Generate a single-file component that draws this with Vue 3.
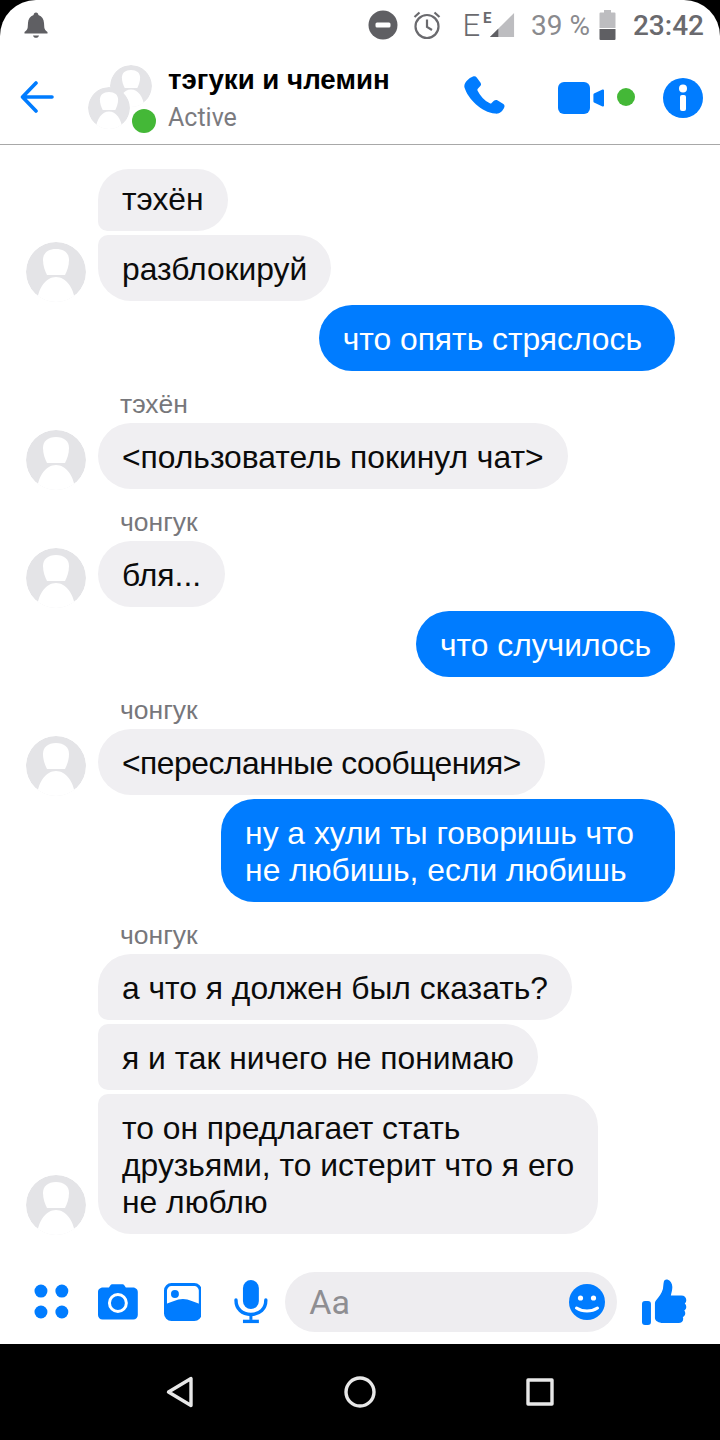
<script setup>
const groups = [
  { side: 'in', top: 24, items: [{ text: 'тэхён' }, { text: 'разблокируй' }] },
  { side: 'out', top: 4, items: [{ text: 'что опять стряслось', extra: 'pad-s' }] },
  { side: 'in', top: 20, name: 'тэхён', items: [{ text: '<пользователь покинул чат>' }] },
  { side: 'in', top: 20, name: 'чонгук', items: [{ text: 'бля...' }] },
  { side: 'out', top: 4, items: [{ text: 'что случилось' }] },
  { side: 'in', top: 20, name: 'чонгук', items: [{ text: '<пересланные сообщения>', extra: 'tight' }] },
  { side: 'out', top: 4, items: [{ text: 'ну а хули ты говоришь что\nне любишь, если любишь', extra: 'pad-l' }] },
  {
    side: 'in',
    top: 20,
    name: 'чонгук',
    items: [
      { text: 'а что я должен был сказать?' },
      { text: 'я и так ничего не понимаю' },
      { text: 'то он предлагает стать\nдрузьями, то истерит что я его\nне люблю' },
    ],
  },
]

const bubbleClass = (g, i, j) => {
  const many = g.side === 'in' && g.items.length > 1
  const end = g.items.length - 1
  return [
    g.items[j].extra,
    {
      top: i === 0 && j === 0,
      first: many && j === 0,
      mid: many && j > 0 && j < end,
      last: many && j === end,
    },
  ]
}
</script>

<template>
  <div class="phone">
    <div class="status">
      <svg class="bell" width="26" height="28" viewBox="0 0 26 28">
        <path d="M13 1.500c1.500 0 2.300 1 2.400 2.400 3.600 1.200 5.400 4.200 5.600 8l.3 4.500c.2 1.800 1.400 3.300 3.200 4.600v1.500H1.500V21c1.800-1.300 3-2.800 3.200-4.600l.3-4.500c.2-3.800 2-6.800 5.600-8 .1-1.400.9-2.400 2.400-2.400z" fill="#5f5f63" />
        <path d="M10 24.500h6c-.4 1.500-1.500 2.300-3 2.300s-2.600-.8-3-2.300z" fill="#5f5f63" />
      </svg>
      <div class="status-right">
        <svg width="30" height="30" viewBox="0 0 30 30"><circle cx="15" cy="15" r="14.500" fill="#5f5f63" /><rect x="7.500" y="12.500" width="15" height="5" rx="1.500" fill="#fff" /></svg>
        <svg class="alarm" width="30" height="30" viewBox="0 0 30 30" fill="none" stroke="#6a6a6e" stroke-width="2.200">
          <circle cx="15" cy="16.500" r="11.500" />
          <path d="M15 9.500v7.500l5 3M2.500 7l5-4.500M27.500 7l-5-4.500" />
        </svg>
        <span class="net">E</span>
        <span class="net-small">E</span>
        <svg class="signal" width="26" height="26" viewBox="0 0 28 28"><path d="M27 1v26H1z" fill="#bdbdc0" /><path d="M10 18v9H1z" fill="#5f5f63" /></svg>
        <span class="pct">39 %</span>
        <svg class="batt" width="17" height="30" viewBox="0 0 17 30"><path d="M5 0h7v2.500h3.500a1 1 0 0 1 1 1V18H.500V3.500a1 1 0 0 1 1-1H5z" fill="#bdbdc0" /><path d="M.500 19h16v10a1 1 0 0 1-1 1h-14a1 1 0 0 1-1-1z" fill="#5f5f63" /></svg>
        <span class="clock">23:42</span>
      </div>
    </div>

    <header class="head">
      <svg class="back" width="34" height="32" viewBox="0 0 34 32" fill="none" stroke="#007cff" stroke-width="3.600" stroke-linecap="round" stroke-linejoin="round">
        <path d="M32 16H3M16 2 2.500 16 16 30" />
      </svg>
      <div class="group-pic">
        <svg class="pic pic-back" viewBox="0 0 60 60"><use href="#person" /></svg>
        <svg class="pic pic-front" viewBox="0 0 60 60"><use href="#person" /></svg>
        <span class="online"></span>
      </div>
      <div class="title">
        <div class="name">тэгуки и члемин</div>
        <div class="active">Active</div>
      </div>
      <svg class="phone-ic" width="42" height="42" viewBox="0 0 42 42">
        <path d="M9 .500c1.500-.6 2.800-.2 3.700.9l3.700 5c.9 1.200.8 2.600-.1 3.700l-2.500 2.700c-.5.600-.5 1.200-.2 1.900 2.700 5.400 6.700 9.700 12.200 12.600.7.300 1.300.3 1.800-.3l2.300-2.200c1.100-1 2.500-1.200 3.800-.4l5.300 3.300c1.300.8 1.900 2.100 1.300 3.500-1.300 3.300-4.700 7.100-9.200 6.400C17.300 36.500 3.800 22.500.500 11.500-.7 7 4.500 2.300 9 .500z" fill="#007cff" />
      </svg>
      <svg class="video" width="46" height="32" viewBox="0 0 46 32">
        <rect x="0" y="0" width="32" height="32" rx="6" fill="#007cff" /><path d="M36 11.500 44.500 7.500c.5-.2 1.500 0 1.500 1v15c0 1-1 1.200-1.500 1l-8.500-4c-.4-.3-.6-.7-.6-1.200v-6.600c0-.5.200-.9.600-1.200z" fill="#007cff" />
      </svg>
      <span class="dot"></span>
      <svg class="info" width="40" height="40" viewBox="0 0 40 40">
        <circle cx="20" cy="20" r="20" fill="#007cff" /><circle cx="20" cy="10.500" r="4" fill="#fff" /><rect x="17" y="17" width="6" height="16" rx="2" fill="#fff" />
      </svg>
    </header>

    <main class="chat">
      <section v-for="(g, i) in groups" :key="i" class="group" :class="g.side" :style="{ marginTop: g.top + 'px' }">
        <div v-if="g.name" class="sender">{{ g.name }}</div>
        <div v-for="(item, j) in g.items" :key="j" class="row">
          <svg v-if="g.side === 'in' && j === g.items.length - 1" class="avatar" viewBox="0 0 60 60"><use href="#person" /></svg>
          <div class="bubble" :class="bubbleClass(g, i, j)">{{ item.text }}</div>
        </div>
      </section>
    </main>

    <footer class="composer">
      <svg width="36" height="36" viewBox="0 0 36 36" fill="#007cff"><circle cx="7" cy="7" r="6.500" /><circle cx="28" cy="7" r="6.500" /><circle cx="7" cy="28" r="6.500" /><circle cx="28" cy="28" r="6.500" /></svg>
      <svg width="40" height="36" viewBox="0 0 40 36"><path d="M5 3.500h6l1.500-2.300c.4-.6 1-1 1.700-1h10.500c.7 0 1.300.4 1.700 1L28 3.500h7c2.500 0 5 1.700 5 4.500v23c0 2.700-2 4.500-4.500 4.500h-31C2 35.500 0 33.700 0 31V8c0-2.800 2.500-4.500 5-4.500z" fill="#007cff" /><circle cx="20" cy="19" r="8.500" fill="none" stroke="#fff" stroke-width="3" /></svg>
      <svg width="38" height="38" viewBox="0 0 38 38"><rect x="1.500" y="1.500" width="35" height="35" rx="6" fill="#fff" stroke="#007cff" stroke-width="3" /><path d="M2 21c5-1.500 11-5 17-5s12 3.500 17 5v10a5 5 0 0 1-5 5H7a5 5 0 0 1-5-5z" fill="#007cff" /><circle cx="11" cy="11" r="4" fill="#007cff" /></svg>
      <svg width="34" height="44" viewBox="0 0 34 44" fill="none"><rect x="9" y="0" width="16" height="29" rx="8" fill="#007cff" /><path d="M2 20c0 9 6 14.500 15 14.500S32 29 32 20" stroke="#007cff" stroke-width="3.400" stroke-linecap="round" /><path d="M9 41.500h16" stroke="#007cff" stroke-width="3.400" /><path d="M17 34v6" stroke="#007cff" stroke-width="3" /></svg>
      <div class="input">
        <span class="aa">Aa</span>
        <svg width="36" height="36" viewBox="0 0 36 36"><circle cx="18" cy="18" r="18" fill="#007cff" /><circle cx="11.500" cy="14" r="2.600" fill="#fff" /><circle cx="24.500" cy="14" r="2.600" fill="#fff" /><path d="M7.500 24c6 4 15 4 21 0" fill="none" stroke="#fff" stroke-width="3" stroke-linecap="round" /></svg>
      </div>
      <svg class="like" width="46" height="46" viewBox="0 0 46 46" fill="#007cff">
        <rect x="0" y="22" width="9" height="24" rx="3" />
        <path d="M13 24c0-1 .4-1.800 1-2.500 3-3.400 6-7.500 7-11.500.4-2 .4-5 1-7.500.4-1.700 2-2.500 3.500-2 3 1 5 4 5 7.500 0 3-1 6-1.500 8.500h10.500c3 0 5 2 5 4.500 0 1.500-.5 2.700-1.500 3.500 1 .8 1.500 2 1.500 3.500s-.7 2.800-2 3.500c.6.800 1 1.700 1 2.800 0 1.700-1 3.200-2.500 3.700.3.700.4 1.300.4 2 0 2.500-2 4-4.500 4H21c-4 0-8-2-8-5z" />
      </svg>
    </footer>

    <nav class="nav">
      <svg width="28" height="32" viewBox="0 0 28 32" fill="none" stroke="#e8e8e8" stroke-width="3.400" stroke-linejoin="round"><path d="M25 2.500v27L2.500 16z" /></svg>
      <svg width="32" height="32" viewBox="0 0 32 32" fill="none" stroke="#e8e8e8" stroke-width="3.400"><circle cx="16" cy="16" r="14" /></svg>
      <svg width="28" height="28" viewBox="0 0 28 28" fill="none" stroke="#e8e8e8" stroke-width="3.400" stroke-linejoin="round"><rect x="2" y="2" width="24" height="24" /></svg>
    </nav>

    <span class="corner tl"></span>
    <span class="corner tr"></span>

    <svg class="defs" width="0" height="0">
      <defs>
        <clipPath id="disc"><circle cx="30" cy="30" r="30" /></clipPath>
        <g id="person" clip-path="url(#disc)">
          <circle cx="30" cy="30" r="30" fill="#e4e4e7" />
          <path d="M30 7c8 0 13 4 13 11 0 6-2 11-4 15H21c-2-4-4-9-4-15 0-7 5-11 13-11z" fill="#fff" />
          <path d="M11 60c1-14 9-25 19-25s18 11 19 25z" fill="#fff" />
        </g>
      </defs>
    </svg>
  </div>
</template>

<style scoped>
.phone {
  position: relative;
  width: 720px;
  height: 1440px;
  overflow: hidden;
  background: #fff;
  font-family: Roboto, "Liberation Sans", sans-serif;
  display: flex;
  flex-direction: column;
}
.status {
  height: 50px;
  display: flex;
  align-items: center;
  justify-content: space-between;
  padding: 0 16px 0 23px;
  color: #6a6a6e;
  flex: none;
}
.status-right {
  display: flex;
  align-items: center;
}
.alarm {
  margin-left: 14px;
}
.net {
  font-size: 31px;
  margin-left: 20px;
  font-weight: 300;
}
.net-small {
  font-size: 15px;
  font-weight: 700;
  margin: -14px 0 0 3px;
  width: 4px;
}
.signal {
  margin-left: 2px;
}
.pct {
  font-size: 28px;
  margin-left: 16px;
  color: #8a8a8e;
}
.batt {
  margin-left: 9px;
}
.clock {
  font-size: 28px;
  margin-left: 17px;
  font-weight: 500;
}
.head {
  height: 95px;
  flex: none;
  border-bottom: 1px solid #a8a8a8;
  box-sizing: border-box;
  display: flex;
  align-items: center;
  padding: 0 16px 0 20px;
}
.group-pic {
  position: relative;
  width: 72px;
  height: 70px;
  margin-left: 34px;
  flex: none;
}
.pic {
  position: absolute;
  width: 42px;
  height: 42px;
}
.pic-back {
  left: 22px;
  top: 3px;
}
.pic-front {
  left: 0;
  top: 25px;
}
.online {
  position: absolute;
  left: 44px;
  top: 47px;
  width: 24px;
  height: 24px;
  border-radius: 50%;
  background: #44b837;
}
.title {
  margin-left: 8px;
  width: 296px;
  flex: none;
  margin-top: 5px;
}
.name {
  font-family: "Liberation Sans", Arial, sans-serif;
  font-size: 27.700px;
  font-weight: 700;
  color: #000;
  line-height: 34px;
}
.active {
  font-size: 25px;
  line-height: 36px;
  margin-top: 3px;
  color: #7b7b7f;
}
.video {
  margin-left: 52px;
  margin-top: 2px;
}
.dot {
  width: 18px;
  height: 18px;
  border-radius: 50%;
  background: #44b837;
  margin-left: 13px;
}
.info {
  margin-left: 28px;
  margin-top: 2px;
}
.chat {
  flex: 1;
  min-height: 0;
  display: flex;
  flex-direction: column;
}
.group {
  display: flex;
  flex-direction: column;
  gap: 4px;
}
.group.in {
  padding-left: 98px;
  align-items: flex-start;
}
.group.out {
  padding-right: 45px;
  align-items: flex-end;
}
.sender {
  font-family: "Liberation Sans", Arial, sans-serif;
  font-size: 26.500px;
  line-height: 27px;
  color: #77777b;
  margin: 0 0 1px 22px;
}
.row {
  position: relative;
}
.avatar {
  position: absolute;
  left: -72px;
  bottom: -1px;
  width: 60px;
  height: 60px;
}
.bubble {
  font-family: "Liberation Sans", Arial, sans-serif;
  font-size: 31.800px;
  line-height: 37px;
  padding: 15.500px 24px 13.500px;
  border-radius: 33px;
  white-space: pre-line;
  background: #f0eff2;
  color: #0b0b0b;
}
.out .bubble {
  background: #007cff;
  color: #fff;
}
.bubble.top {
  padding-top: 11.500px;
}
.bubble.tight {
  letter-spacing: -0.480px;
}
.bubble.pad-s {
  padding-right: 33px;
}
.bubble.pad-l {
  padding-right: 41px;
}
.bubble.first {
  border-bottom-left-radius: 10px;
}
.bubble.mid {
  border-top-left-radius: 10px;
  border-bottom-left-radius: 10px;
}
.bubble.last {
  border-top-left-radius: 10px;
}
.composer {
  height: 84px;
  flex: none;
  display: flex;
  align-items: center;
  padding: 0 32px 0 34px;
  box-sizing: border-box;
}
.composer > svg:nth-child(2) {
  margin-left: 28px;
}
.composer > svg:nth-child(3) {
  margin-left: 26px;
}
.composer > svg:nth-child(4) {
  margin-left: 33px;
}
.input {
  width: 332px;
  height: 60px;
  margin-left: 17px;
  border-radius: 30px;
  background: #eeedf0;
  display: flex;
  align-items: center;
  justify-content: space-between;
  padding: 0 12px 0 24px;
  box-sizing: border-box;
  flex: none;
}
.aa {
  font-size: 34px;
  color: #8e8e92;
}
.like {
  margin-left: 25px;
}
.nav {
  height: 96px;
  flex: none;
  background: #000;
  display: flex;
  align-items: center;
  justify-content: center;
  gap: 150px;
}
.corner {
  position: absolute;
  top: 0;
  width: 36px;
  height: 36px;
  overflow: hidden;
}
.corner::before {
  content: "";
  position: absolute;
  width: 72px;
  height: 72px;
  border-radius: 50%;
  box-shadow: 0 0 0 40px #000;
  top: 0;
}
.corner.tl {
  left: 0;
}
.corner.tl::before {
  left: 0;
}
.corner.tr {
  right: 0;
}
.corner.tr::before {
  right: 0;
}
.defs {
  position: absolute;
}
</style>
